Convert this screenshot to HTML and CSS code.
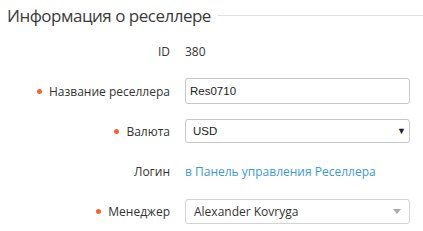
FILE: index.html
```html
<!DOCTYPE html>
<html lang="ru">
  <head>
    <meta charset="UTF-8" />
    <title>Информация о реселлере</title>
    <link rel="stylesheet" href="styles.css">
  </head>
  <body>
    <div class="section">
      <div class="section-title">
        <span>Информация о реселлере</span>
        <div class="line"></div>
      </div>

      <div class="form">
        <div class="row">
          <div class="label">ID</div>
          <div class="value">380</div>
        </div>
        <div class="row">
          <div class="label required">Название реселлера</div>
          <input class="text-input" type="text" value="Res0710">
        </div>
        <div class="row">
          <div class="label required">Валюта</div>
          <div class="native-select">
            <span>USD</span>
            <span class="arrow">▼</span>
          </div>
        </div>
        <div class="row">
          <div class="label">Логин</div>
          <a class="link" href="#">в Панель управления Реселлера</a>
        </div>
        <div class="row">
          <div class="label required">Менеджер</div>
          <div class="fancy-select">
            <span>Alexander Kovryga</span>
            <span class="caret"></span>
          </div>
        </div>
      </div>
    </div>
  </body>
</html>
```

FILE: styles.css
```css
body {
  margin: 0;
  font-family: "Open Sans", Arial, sans-serif;
  background-color: #fff;
  color: #333;
}

.section {
  padding: 2px 0 0 7px;
}

.section-title {
  display: flex;
  align-items: center;
  gap: 7px;
  font-size: 17px;
  letter-spacing: -0.5px;
  color: #3b3b3b;
  height: 26px;
}

.section-title .line {
  flex: 1;
  height: 1px;
  background-color: #dcdfe3;
}

.form {
  display: flex;
  flex-direction: column;
  margin-top: 10px;
}

.row {
  display: grid;
  grid-template-columns: 163px 225px;
  column-gap: 15px;
  align-items: center;
  height: 26px;
  margin-bottom: 14px;
  font-size: 12px;
}

.label {
  text-align: right;
  color: #333;
}

.label.required::before {
  content: "";
  display: inline-block;
  width: 5px;
  height: 5px;
  border-radius: 50%;
  background-color: #f26430;
  margin-right: 7px;
  vertical-align: 2px;
}

.value {
  color: #333;
}

.text-input {
  box-sizing: border-box;
  height: 26px;
  width: 225px;
  margin: 0;
  padding: 0 4px;
  border: 1px solid #c5c9ce;
  border-radius: 3px;
  font-family: "Liberation Sans", Arial, sans-serif;
  font-size: 11.5px;
  color: #222;
}

.native-select {
  box-sizing: border-box;
  height: 24px;
  display: flex;
  justify-content: space-between;
  align-items: center;
  padding: 0 3px 0 7px;
  border: 1px solid #c5c9ce;
  border-radius: 3px;
  font-family: "Liberation Sans", Arial, sans-serif;
  font-size: 11.5px;
  color: #222;
}

.native-select .arrow {
  font-size: 9px;
  color: #222;
}

.link {
  color: #3a9ad9;
  text-decoration: none;
}

.fancy-select {
  box-sizing: border-box;
  height: 25px;
  display: flex;
  justify-content: space-between;
  align-items: center;
  padding: 0 8px;
  border: 1px solid #d0d4d8;
  border-radius: 3px;
  color: #333;
}

.fancy-select .caret {
  width: 0;
  height: 0;
  border-left: 4px solid transparent;
  border-right: 4px solid transparent;
  border-top: 5px solid #aaa;
}
```
